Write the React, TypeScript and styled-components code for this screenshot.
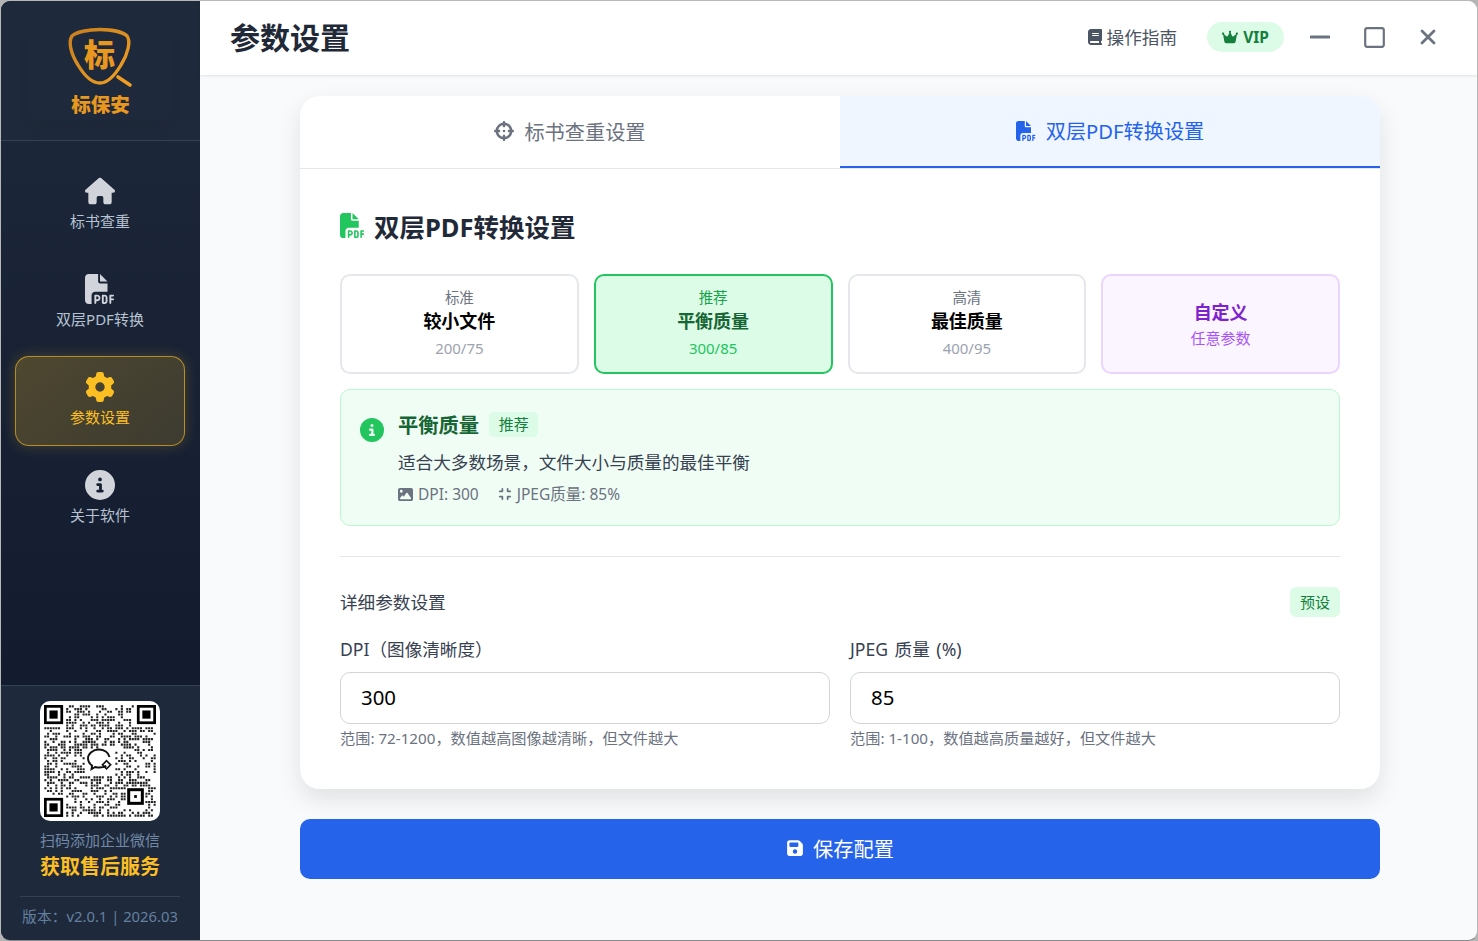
import React from "react";
import styled, { createGlobalStyle } from "styled-components";
import {
   FaBook,
   FaCircleInfo,
   FaCompress,
   FaCrosshairs,
   FaCrown,
   FaFilePdf,
   FaFloppyDisk,
   FaGear,
   FaHouse,
   FaImage,
} from "react-icons/fa6";

const FONT = `"Noto Sans", "Noto Sans CJK SC", sans-serif`;

const GlobalStyle = createGlobalStyle`
   html, body {
      margin: 0;
      height: 100%;
      overflow: hidden;
      background: #b4b4b4;
   }
   body {
      font-family: ${FONT};
   }
   * {
      box-sizing: border-box;
   }
`;

const Window = styled.div`
   width: 1478px;
   height: 941px;
   display: flex;
   border: 1px solid #b8b8b8;
   border-bottom-color: #8a8a8a;
   border-radius: 10px;
   overflow: hidden;
   background: #f9fafb;
`;

const Sidebar = styled.aside`
   width: 199px;
   flex-shrink: 0;
   display: flex;
   flex-direction: column;
   background: linear-gradient(180deg, #1e293b 0%, #0f172a 100%);
`;

const Brand = styled.div`
   height: 140px;
   flex-shrink: 0;
   display: flex;
   justify-content: center;
   padding: 24px 1px 0 0;
   background: #1e293b;
   border-bottom: 1px solid #334155;
`;

const BrandBox = styled.div`
   width: 140px;
   height: 96px;
   display: flex;
   flex-direction: column;
   align-items: center;
   border-radius: 12px;
   box-shadow: 0 8px 14px rgba(0, 0, 0, 0.05);
`;

const BrandName = styled.div`
   margin-top: -3px;
   margin-left: 1px;
   font-size: 19.5px;
   line-height: 26px;
   font-weight: 900;
   color: #e8981f;
`;

const Nav = styled.nav`
   flex: 1;
   display: flex;
   flex-direction: column;
   gap: 8px;
   padding: 19px 15px 0 14px;
`;

const NavItem = styled.div<{ $active?: boolean }>`
   height: 90px;
   display: flex;
   flex-direction: column;
   align-items: center;
   padding-top: 14px;
   border-radius: 14px;
   border: 1px solid ${(p) => (p.$active ? "rgba(251, 191, 36, 0.62)" : "transparent")};
   background: ${(p) =>
      p.$active
         ? "linear-gradient(135deg, rgba(251, 191, 36, 0.24), rgba(251, 191, 36, 0.17))"
         : "transparent"};
   box-shadow: ${(p) => (p.$active ? "0 0 14px rgba(251, 191, 36, 0.22)" : "none")};
   color: ${(p) => (p.$active ? "#fbbf24" : "#d1d5db")};
`;

const NavIcon = styled.div`
   height: 32px;
   font-size: 30px;
   line-height: 32px;
   display: flex;
   align-items: center;
`;

const NavLabel = styled.div<{ $active?: boolean }>`
   margin-top: 3px;
   font-size: 15px;
   line-height: 22px;
   white-space: nowrap;
   color: ${(p) => (p.$active ? "#fbbf24" : "#b6c2d2")};
`;

const SideFooter = styled.div`
   height: 255px;
   flex-shrink: 0;
   display: flex;
   flex-direction: column;
   align-items: center;
   padding: 15px 1px 0 0;
   background: #1e293b;
   border-top: 1px solid #334155;
`;

const QrCard = styled.div`
   width: 120px;
   height: 120px;
   border-radius: 10px;
   background: #ffffff;
   display: flex;
   align-items: center;
   justify-content: center;
`;

const QrHint = styled.div`
   margin-top: 8px;
   font-size: 15px;
   line-height: 22px;
   color: #7189a6;
   white-space: nowrap;
`;

const QrCall = styled.div`
   margin-top: 2px;
   font-size: 20px;
   line-height: 28px;
   font-weight: 700;
   color: #fbbf24;
   white-space: nowrap;
`;

const Version = styled.div`
   width: 160px;
   margin-top: 15px;
   padding-top: 8px;
   border-top: 1px solid #334155;
   text-align: center;
   font-size: 14.8px;
   line-height: 22px;
   color: #64809f;
   white-space: nowrap;
`;

const Main = styled.main`
   flex: 1;
   min-width: 0;
   display: flex;
   flex-direction: column;
`;

const TopBar = styled.header`
   height: 74px;
   flex-shrink: 0;
   display: flex;
   align-items: center;
   padding: 0 40px 2px 30px;
   background: #ffffff;
   box-shadow: 0 1px 3px rgba(0, 0, 0, 0.1);
`;

const PageTitle = styled.h1`
   margin: 0;
   flex: 1;
   padding-top: 2px;
   font-size: 30px;
   line-height: 40px;
   font-weight: 700;
   color: #1f2937;
`;

const GuideLink = styled.div`
   display: flex;
   align-items: center;
   gap: 4px;
   padding-bottom: 1px;
   font-size: 17.6px;
   color: #4b5563;
`;

const VipPill = styled.div`
   width: 77px;
   height: 30px;
   margin-left: 30px;
   display: flex;
   align-items: center;
   justify-content: center;
   gap: 5px;
   border-radius: 15px;
   background: #dcfce7;
   color: #15803d;
   font-size: 15.5px;
   font-weight: 700;
`;

const WinButtons = styled.div`
   margin-left: 26px;
   display: flex;
   align-items: center;
   gap: 34px;
`;

const Content = styled.div`
   flex: 1;
   display: flex;
   flex-direction: column;
   align-items: center;
   padding: 21px 0 0 3px;
`;

const Card = styled.section`
   width: 1080px;
   height: 693px;
   flex-shrink: 0;
   border-radius: 20px;
   overflow: hidden;
   background: #ffffff;
   box-shadow: 0 10px 25px rgba(0, 0, 0, 0.1);
`;

const Tabs = styled.div`
   height: 73px;
   display: flex;
   border-bottom: 1px solid #e5e7eb;
`;

const Tab = styled.div<{ $active?: boolean }>`
   flex: 1;
   display: flex;
   align-items: center;
   justify-content: center;
   gap: 10px;
   font-size: 20.2px;
   color: ${(p) => (p.$active ? "#2563eb" : "#6b7280")};
   background: ${(p) => (p.$active ? "#eff6ff" : "transparent")};
   border-bottom: 2px solid ${(p) => (p.$active ? "#2563eb" : "transparent")};
   padding-bottom: ${(p) => (p.$active ? "1px" : "0")};
`;

const CardBody = styled.div`
   padding: 37px 40px 0;
`;

const SectionTitle = styled.h2`
   margin: 0;
   height: 38px;
   display: flex;
   align-items: center;
   gap: 9px;
   font-size: 25.5px;
   font-weight: 700;
   color: #1f2937;
`;

const GreenIcon = styled.span`
   display: flex;
   color: #22c55e;
   font-size: 25px;
`;

const Presets = styled.div`
   margin-top: 30px;
   display: grid;
   grid-template-columns: repeat(4, 1fr);
   gap: 15px;
`;

const presetColors = {
   plain: { bg: "#ffffff", border: "#e5e7eb", top: "#6b7280", name: "#000000", sub: "#9ca3af" },
   active: { bg: "#dcfce7", border: "#22c55e", top: "#16a34a", name: "#166534", sub: "#22c55e" },
   custom: { bg: "#faf5ff", border: "#e9d5ff", top: "#a855f7", name: "#7e22ce", sub: "#a855f7" },
};

type PresetKind = keyof typeof presetColors;

const Preset = styled.div<{ $kind: PresetKind }>`
   height: 100px;
   display: flex;
   flex-direction: column;
   align-items: center;
   justify-content: center;
   padding-bottom: 2px;
   border-radius: 10px;
   border: 2px solid ${(p) => presetColors[p.$kind].border};
   background: ${(p) => presetColors[p.$kind].bg};
`;

const PresetTop = styled.div<{ $kind: PresetKind }>`
   font-size: 14.5px;
   line-height: 20px;
   color: ${(p) => presetColors[p.$kind].top};
`;

const PresetName = styled.div<{ $kind: PresetKind }>`
   margin-top: 1px;
   font-size: 18px;
   line-height: 26px;
   font-weight: 700;
   color: ${(p) => presetColors[p.$kind].name};
`;

const PresetSub = styled.div<{ $kind: PresetKind; $tight?: boolean }>`
   margin-top: ${(p) => (p.$tight ? "2px" : "3px")};
   font-size: 15px;
   line-height: 22px;
   color: ${(p) => presetColors[p.$kind].sub};
`;

const InfoBox = styled.div`
   margin-top: 15px;
   height: 137px;
   display: flex;
   gap: 14px;
   padding: 20px 19px 0;
   border-radius: 10px;
   border: 1px solid #bbf7d0;
   background: #f0fdf4;
`;

const InfoIcon = styled.div`
   padding-top: 8px;
   font-size: 24px;
   line-height: 0;
   color: #22c55e;
`;

const InfoHead = styled.div`
   display: flex;
   align-items: center;
   gap: 10px;
   height: 28px;
`;

const InfoName = styled.div`
   font-size: 20.3px;
   font-weight: 700;
   color: #166534;
`;

const Tag = styled.div`
   display: flex;
   align-items: center;
   justify-content: center;
   padding-bottom: 2px;
   border-radius: 5px;
   background: #dcfce7;
   color: #15803d;
   font-size: 15px;
`;

const InfoTag = styled(Tag)`
   width: 49px;
   height: 25px;
`;

const InfoDesc = styled.div`
   margin-top: 10px;
   height: 28px;
   font-size: 17.6px;
   line-height: 28px;
   color: #374151;
`;

const InfoMeta = styled.div`
   margin-top: 6px;
   display: flex;
   gap: 19px;
   font-size: 15.5px;
   line-height: 24px;
   color: #6b7280;
`;

const MetaItem = styled.div`
   display: flex;
   align-items: center;
   gap: 5px;
`;

const Divider = styled.hr`
   margin: 30px 0 0;
   border: 0;
   border-top: 1px solid #e5e7eb;
`;

const DetailHead = styled.div`
   margin-top: 30px;
   height: 30px;
   display: flex;
   align-items: center;
   justify-content: space-between;
`;

const DetailTitle = styled.div`
   margin-bottom: 1px;
   font-size: 17.6px;
   color: #374151;
`;

const DetailTag = styled(Tag)`
   width: 50px;
   height: 30px;
   border-radius: 6px;
`;

const Fields = styled.div`
   margin-top: 19px;
   display: grid;
   grid-template-columns: 1fr 1fr;
   gap: 20px;
`;

const Label = styled.label`
   display: block;
   font-size: 17.6px;
   line-height: 26px;
   word-spacing: 2px;
   color: #374151;
`;

const NumberInput = styled.input`
   display: block;
   width: 100%;
   height: 52px;
   margin-top: 10px;
   padding: 0 20px 3px;
   border: 1px solid #d1d5db;
   border-radius: 10px;
   outline: none;
   background: #ffffff;
   font-family: ${FONT};
   font-size: 20.4px;
   color: #000000;
`;

const Hint = styled.div`
   margin-top: 3px;
   font-size: 15.2px;
   line-height: 22px;
   color: #6b7280;
`;

const SaveButton = styled.button`
   width: 1080px;
   height: 60px;
   flex-shrink: 0;
   margin-top: 30px;
   padding: 0 0 2px;
   display: flex;
   align-items: center;
   justify-content: center;
   gap: 9px;
   border: 0;
   border-radius: 10px;
   background: #2563eb;
   color: #ffffff;
   font-family: ${FONT};
   font-size: 20.2px;
`;

function LogoMark() {
   return (
      <svg
         width={70}
         height={70}
         viewBox="65 25 70 70">
         <defs>
            <linearGradient
               id="logoGold"
               x1="0"
               y1="0"
               x2="1"
               y2="1">
               <stop
                  offset="0"
                  stopColor="#c97f1c"
               />
               <stop
                  offset="1"
                  stopColor="#f0a024"
               />
            </linearGradient>
         </defs>
         <path
            d="M100 29.5C112 29.5 123 32 127 36C131 41 128 54 121 65C115 75 107 83 100 83C92 83 84 75 78 65C71 54 68 42 72 36C76 32 88 29.5 100 29.5Z"
            fill="none"
            stroke="url(#logoGold)"
            strokeWidth="3.4"
         />
         <path
            d="M118 77L130 85"
            stroke="#ee9d22"
            strokeWidth="3.6"
            strokeLinecap="round"
         />
         <text
            x="99.5"
            y="66"
            textAnchor="middle"
            fontSize="31"
            fontWeight="900"
            fontFamily='"Noto Sans CJK SC", sans-serif'
            fill="#e8981f">
            标
         </text>
      </svg>
   );
}

// not a real code: same look as the picture, modules come from a small seeded generator
function QrCode() {
   const size = 41;
   const cell = 112 / size;
   let seed = 20260311;
   const next = () => {
      seed = (seed * 1664525 + 1013904223) % 4294967296;
      return seed / 4294967296;
   };
   const inFinder = (x: number, y: number) =>
      (x < 8 && y < 8) || (x >= size - 8 && y < 8) || (x < 8 && y >= size - 8);
   const inLogo = (x: number, y: number) =>
      x >= 15 && x <= 25 && y >= 16 && y <= 25;
   const inAlign = (x: number, y: number) =>
      x >= 30 && x <= 36 && y >= 30 && y <= 36;
   const modules: string[] = [];
   for (let y = 0; y < size; y++) {
      for (let x = 0; x < size; x++) {
         const on = next() > 0.5;
         if (on && !inFinder(x, y) && !inLogo(x, y) && !inAlign(x, y)) {
            modules.push(`M${x + 0.12} ${y + 0.12}h.76v.76h-.76z`);
         }
      }
   }
   const finder = (x: number, y: number) => (
      <g key={`${x}-${y}`}>
         <rect
            x={x + 0.5}
            y={y + 0.5}
            width={6}
            height={6}
            fill="none"
            stroke="#000"
         />
         <rect
            x={x + 2}
            y={y + 2}
            width={3}
            height={3}
            fill="#000"
         />
      </g>
   );
   return (
      <svg
         width={cell * size}
         height={cell * size}
         viewBox={`0 0 ${size} ${size}`}>
         <path
            d={modules.join("")}
            fill="#222"
         />
         {finder(0, 0)}
         {finder(size - 7, 0)}
         {finder(0, size - 7)}
         <rect
            x={31}
            y={31}
            width={5}
            height={5}
            fill="none"
            stroke="#000"
            strokeWidth={1.1}
         />
         <rect
            x={33}
            y={33}
            width={1}
            height={1}
            fill="#000"
         />
         <path
            d="M22.8 22.3c-.7.4-1.5.6-2.5.6-.6 0-1.1-.1-1.6-.2l-1.3.8.2-1.3c-.9-.6-1.5-1.5-1.5-2.6 0-1.8 1.8-3.3 4-3.3 1.9 0 3.5 1.1 3.9 2.7"
            fill="none"
            stroke="#111"
            strokeWidth=".7"
         />
         <path
            d="M22.9 20.4l1.5 1.5-1.5 1.500-1.500-1.500z"
            fill="none"
            stroke="#111"
            strokeWidth=".6"
         />
      </svg>
   );
}

function WinIcons() {
   return (
      <WinButtons>
         <svg
            width={20}
            height={20}
            viewBox="0 0 20 20">
            <path
               d="M1 10H19"
               stroke="#6b7280"
               strokeWidth="3"
               strokeLinecap="round"
            />
         </svg>
         <svg
            width={21}
            height={21}
            viewBox="0 0 21 21">
            <rect
               x="1.2"
               y="1.2"
               width="18.6"
               height="18.6"
               rx="2"
               fill="none"
               stroke="#6b7280"
               strokeWidth="2.2"
            />
         </svg>
         <svg
            width={18}
            height={18}
            viewBox="0 0 18 18">
            <path
               d="M3 3L15 15M15 3L3 15"
               stroke="#6b7280"
               strokeWidth="2.8"
               strokeLinecap="round"
            />
         </svg>
      </WinButtons>
   );
}

export default function App() {
   return (
      <>
         <GlobalStyle />
         <Window>
            <Sidebar>
               <Brand>
                  <BrandBox>
                     <LogoMark />
                     <BrandName>标保安</BrandName>
                  </BrandBox>
               </Brand>
               <Nav>
                  <NavItem>
                     <NavIcon>
                        <FaHouse />
                     </NavIcon>
                     <NavLabel>标书查重</NavLabel>
                  </NavItem>
                  <NavItem>
                     <NavIcon>
                        <FaFilePdf />
                     </NavIcon>
                     <NavLabel>双层PDF转换</NavLabel>
                  </NavItem>
                  <NavItem $active>
                     <NavIcon>
                        <FaGear />
                     </NavIcon>
                     <NavLabel $active>参数设置</NavLabel>
                  </NavItem>
                  <NavItem>
                     <NavIcon>
                        <FaCircleInfo />
                     </NavIcon>
                     <NavLabel>关于软件</NavLabel>
                  </NavItem>
               </Nav>
               <SideFooter>
                  <QrCard>
                     <QrCode />
                  </QrCard>
                  <QrHint>扫码添加企业微信</QrHint>
                  <QrCall>获取售后服务</QrCall>
                  <Version>版本：v2.0.1 | 2026.03</Version>
               </SideFooter>
            </Sidebar>
            <Main>
               <TopBar>
                  <PageTitle>参数设置</PageTitle>
                  <GuideLink>
                     <FaBook size={16} />
                     操作指南
                  </GuideLink>
                  <VipPill>
                     <FaCrown size={16} />
                     VIP
                  </VipPill>
                  <WinIcons />
               </TopBar>
               <Content>
                  <Card>
                     <Tabs>
                        <Tab>
                           <FaCrosshairs size={20} />
                           标书查重设置
                        </Tab>
                        <Tab $active>
                           <FaFilePdf size={20} />
                           双层PDF转换设置
                        </Tab>
                     </Tabs>
                     <CardBody>
                        <SectionTitle>
                           <GreenIcon>
                              <FaFilePdf />
                           </GreenIcon>
                           双层PDF转换设置
                        </SectionTitle>
                        <Presets>
                           <Preset $kind="plain">
                              <PresetTop $kind="plain">标准</PresetTop>
                              <PresetName $kind="plain">较小文件</PresetName>
                              <PresetSub $kind="plain">200/75</PresetSub>
                           </Preset>
                           <Preset $kind="active">
                              <PresetTop $kind="active">推荐</PresetTop>
                              <PresetName $kind="active">平衡质量</PresetName>
                              <PresetSub $kind="active">300/85</PresetSub>
                           </Preset>
                           <Preset $kind="plain">
                              <PresetTop $kind="plain">高清</PresetTop>
                              <PresetName $kind="plain">最佳质量</PresetName>
                              <PresetSub $kind="plain">400/95</PresetSub>
                           </Preset>
                           <Preset $kind="custom">
                              <PresetName $kind="custom">自定义</PresetName>
                              <PresetSub
                                 $kind="custom"
                                 $tight>
                                 任意参数
                              </PresetSub>
                           </Preset>
                        </Presets>
                        <InfoBox>
                           <InfoIcon>
                              <FaCircleInfo />
                           </InfoIcon>
                           <div>
                              <InfoHead>
                                 <InfoName>平衡质量</InfoName>
                                 <InfoTag>推荐</InfoTag>
                              </InfoHead>
                              <InfoDesc>
                                 适合大多数场景，文件大小与质量的最佳平衡
                              </InfoDesc>
                              <InfoMeta>
                                 <MetaItem>
                                    <FaImage size={15} />
                                    DPI: 300
                                 </MetaItem>
                                 <MetaItem>
                                    <FaCompress size={14} />
                                    JPEG质量: 85%
                                 </MetaItem>
                              </InfoMeta>
                           </div>
                        </InfoBox>
                        <Divider />
                        <DetailHead>
                           <DetailTitle>详细参数设置</DetailTitle>
                           <DetailTag>预设</DetailTag>
                        </DetailHead>
                        <Fields>
                           <div>
                              <Label>DPI（图像清晰度）</Label>
                              <NumberInput
                                 readOnly
                                 value="300"
                              />
                              <Hint>范围: 72-1200，数值越高图像越清晰，但文件越大</Hint>
                           </div>
                           <div>
                              <Label>JPEG 质量 (%)</Label>
                              <NumberInput
                                 readOnly
                                 value="85"
                              />
                              <Hint>范围: 1-100，数值越高质量越好，但文件越大</Hint>
                           </div>
                        </Fields>
                     </CardBody>
                  </Card>
                  <SaveButton>
                     <FaFloppyDisk size={18} />
                     保存配置
                  </SaveButton>
               </Content>
            </Main>
         </Window>
      </>
   );
}
